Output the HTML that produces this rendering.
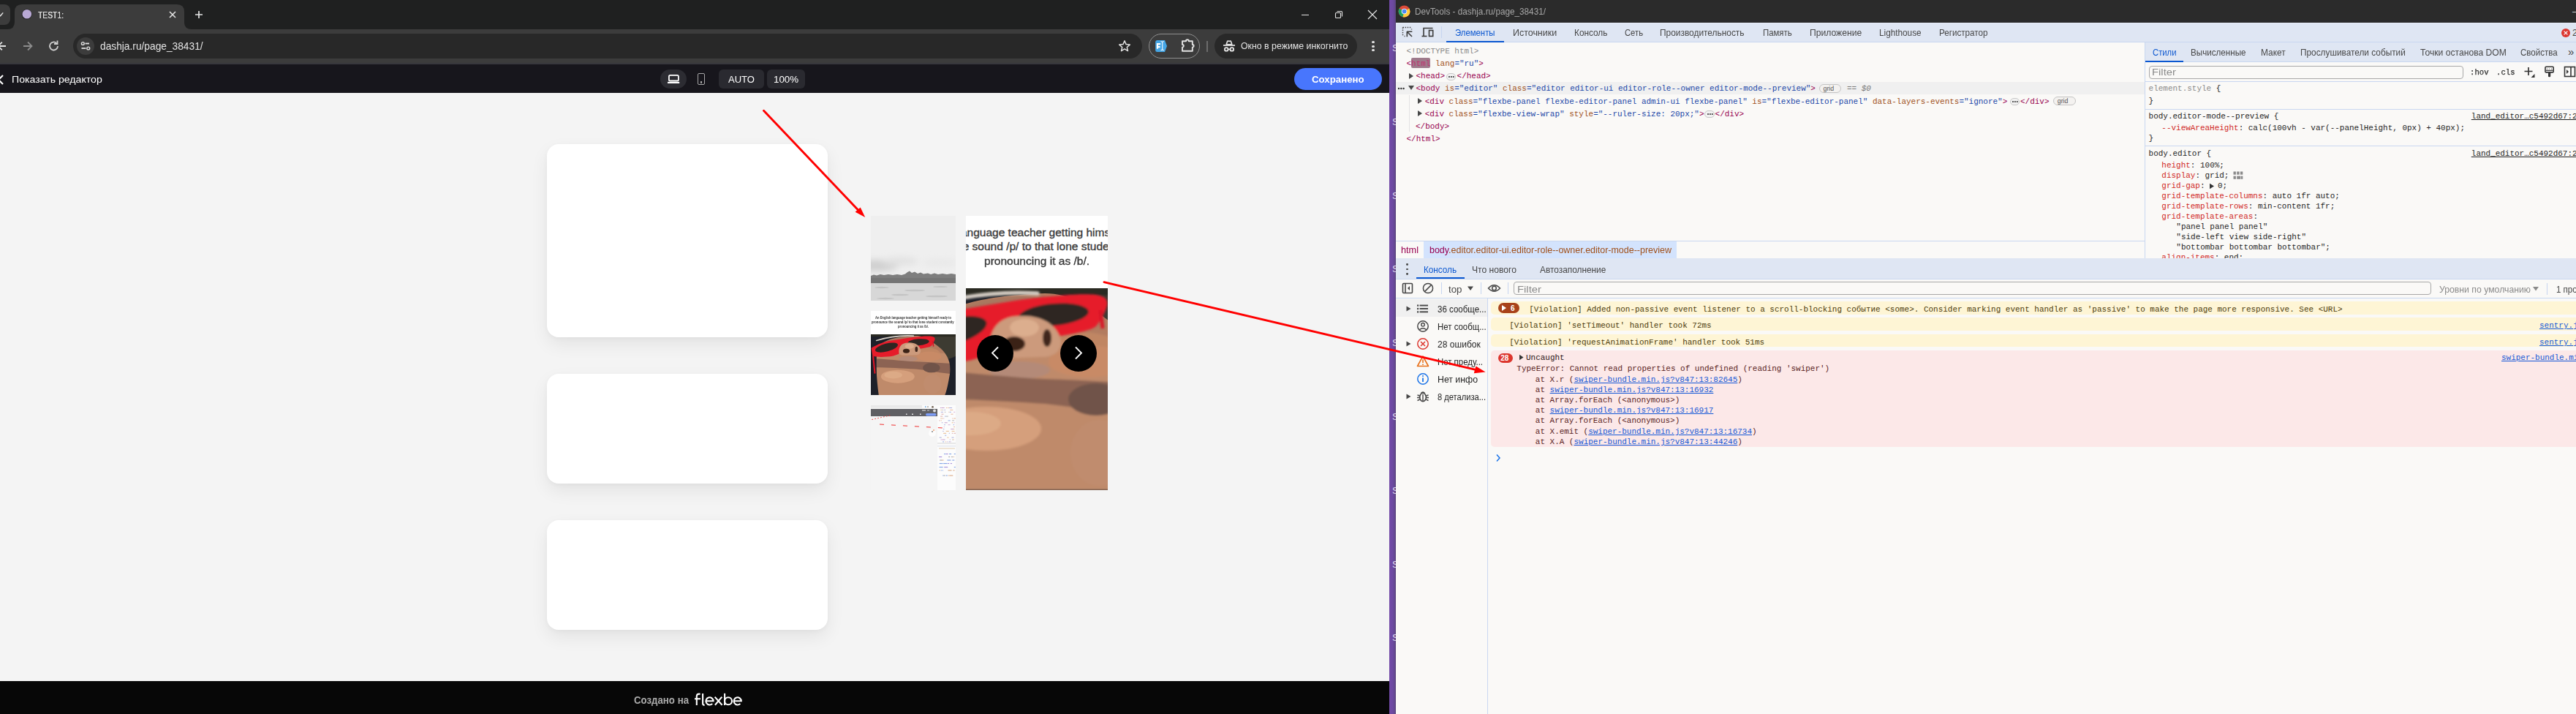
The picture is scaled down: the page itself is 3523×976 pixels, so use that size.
<!DOCTYPE html>
<html><head><meta charset="utf-8"><style>
html,body{margin:0;padding:0;}
body{width:3523px;height:976px;overflow:hidden;position:relative;background:#faf9f7;}
.t{position:absolute;white-space:pre;}
.r{position:absolute;}
.s{position:absolute;overflow:visible;}
</style></head><body>
<div class="r" style="left:0.00px;top:0.00px;width:1900.00px;height:40.00px;background:#1f2020;"></div>
<svg class="s" style="left:0.00px;top:0.00px;" width="300" height="40" viewBox="0 0 300 40"><path d="M10 40 Q20 40 20 30 L20 16 Q20 6 30 6 L242 6 Q252 6 252 16 L252 30 Q252 40 262 40 Z" fill="#3c3c3c"/></svg>
<div class="r" style="left:-20.00px;top:6.00px;width:34.00px;height:28.00px;background:#3c3c3c;border-radius:8px;"></div>
<svg class="s" style="left:0.00px;top:14.00px;" width="8" height="12" viewBox="0 0 8 12"><path d="M-1.5 5.8 L0.6 7.8 L4.2 3.4" stroke="#e8e8e8" stroke-width="1.4" fill="none"/></svg>
<svg class="s" style="left:28.00px;top:11.00px;" width="18" height="18" viewBox="0 0 18 18"><circle cx="8.6" cy="8.6" r="7" fill="#1a1a1a"/><circle cx="8.8" cy="8.3" r="6.3" fill="#b8a8d4"/></svg>
<div class="t" style="left:52.20px;top:15px;font-family:'Liberation Sans', sans-serif;font-size:12.50px;line-height:12.50px;color:#e3e3e3;font-weight:400;transform:scaleX(0.8260);transform-origin:0 0;text-shadow:0 0 0.3px #e3e3e3;">TEST1:</div>
<svg class="s" style="left:230.00px;top:14.00px;" width="12" height="12" viewBox="0 0 12 12"><path d="M2 2 L10 10 M10 2 L2 10" stroke="#e3e3e3" stroke-width="1.6"/></svg>
<svg class="s" style="left:265.00px;top:13.00px;" width="14" height="14" viewBox="0 0 14 14"><path d="M7 2 V12 M2 7 H12" stroke="#e3e3e3" stroke-width="1.7"/></svg>
<div class="r" style="left:1780.00px;top:20.00px;width:10.00px;height:1.20px;background:#e3e3e3;"></div>
<svg class="s" style="left:1824.00px;top:13.00px;" width="14" height="14" viewBox="0 0 14 14"><rect x="2.5" y="4.5" width="7" height="7" fill="none" stroke="#e3e3e3" stroke-width="1.1" rx="1"/><path d="M4.5 2.5 H10.5 Q11.5 2.5 11.5 3.5 V9.5" fill="none" stroke="#e3e3e3" stroke-width="1.1"/></svg>
<svg class="s" style="left:1869.00px;top:12.00px;" width="16" height="16" viewBox="0 0 16 16"><path d="M2 2 L14 14 M14 2 L2 14" stroke="#e3e3e3" stroke-width="1.2"/></svg>
<div class="r" style="left:0.00px;top:40.00px;width:1900.00px;height:46.00px;background:#3c3c3c;"></div>
<div class="r" style="left:0.00px;top:86.00px;width:1900.00px;height:2.00px;background:#38383d;"></div>
<svg class="s" style="left:-6.00px;top:55.00px;" width="18" height="16" viewBox="0 0 18 16"><path d="M2.5 8 H14 M8.8 2.6 L3.4 8 L8.8 13.4" stroke="#e3e3e3" stroke-width="1.8" fill="none"/></svg>
<svg class="s" style="left:30.00px;top:55.00px;" width="18" height="16" viewBox="0 0 18 16"><path d="M2 8 H13 M8 2.5 L13.5 8 L8 13.5" stroke="#8c8c8c" stroke-width="1.8" fill="none"/></svg>
<svg class="s" style="left:65.00px;top:54.00px;" width="18" height="18" viewBox="0 0 18 18"><path d="M14 9 A5.5 5.5 0 1 1 12.2 4.9" stroke="#d0d0d0" stroke-width="1.8" fill="none"/><path d="M13.5 1.5 V6 H9" stroke="#d0d0d0" stroke-width="1.8" fill="none"/></svg>
<div class="r" style="left:100.00px;top:46.00px;width:1462.00px;height:34.00px;background:#282828;border-radius:17px;"></div>
<div class="r" style="left:105.00px;top:51.00px;width:24.00px;height:24.00px;background:#3c3c3c;border-radius:12px;"></div>
<svg class="s" style="left:109.00px;top:55.00px;" width="16" height="16" viewBox="0 0 16 16"><circle cx="4.3" cy="4.5" r="1.9" fill="none" stroke="#e3e3e3" stroke-width="1.4"/><path d="M7.5 4.5 H13" stroke="#e3e3e3" stroke-width="1.8"/><circle cx="11.8" cy="11" r="1.9" fill="none" stroke="#e3e3e3" stroke-width="1.4"/><path d="M2.5 11 H8.5" stroke="#e3e3e3" stroke-width="1.8"/></svg>
<div class="t" style="left:137.00px;top:56px;font-family:'Liberation Sans', sans-serif;font-size:14.00px;line-height:14.00px;color:#e3e3e3;font-weight:400;transform:scaleX(0.9816);transform-origin:0 0;">dashja.ru/page_38431/</div>
<svg class="s" style="left:1529.00px;top:54.00px;" width="18" height="18" viewBox="0 0 18 18"><path d="M9 1.8 L11.1 6.6 L16.2 7.1 L12.3 10.5 L13.5 15.6 L9 12.9 L4.5 15.6 L5.7 10.5 L1.8 7.1 L6.9 6.6 Z" fill="none" stroke="#e3e3e3" stroke-width="1.5" stroke-linejoin="round"/></svg>
<div class="r" style="left:1571.00px;top:46.00px;width:69.50px;height:33.50px;background:transparent;border:1px solid #8f8f8f;border-radius:17px;box-sizing:border-box;"></div>
<svg class="s" style="left:1579.00px;top:53.00px;" width="20" height="20" viewBox="0 0 20 20"><path d="M1.2 4.6 Q1.2 2.1 3.7 2.1 L14 2.1 L17 10 L14 17.9 L3.7 17.9 Q1.2 17.9 1.2 15.4 Z" fill="#45a6e6"/><path d="M3.9 5.9 V13.8 M2.9 7.1 H8.1 M2.9 11.1 H7.6" stroke="#fff" stroke-width="2.1" fill="none"/><path d="M10.7 4.4 V14.9 M8.5 3.4 Q10.7 4.9 12.8 3.4 M8.5 15.9 Q10.7 14.4 12.8 15.9" stroke="#eef6fc" stroke-width="1.1" fill="none"/></svg>
<svg class="s" style="left:1614.00px;top:52.00px;" width="22" height="20" viewBox="0 0 22 20"><path d="M3 4.2 H8 A1.9 1.9 0 0 1 11.8 4.2 H16.8 V9 A1.8 1.8 0 0 1 16.8 12.6 V17.8 H3 V12.6 A1.8 1.8 0 0 0 3 9 Z" fill="none" stroke="#e3e3e3" stroke-width="1.9" stroke-linejoin="round"/></svg>
<div class="r" style="left:1650.00px;top:55.50px;width:2.00px;height:15.00px;background:#6b6b6b;"></div>
<div class="r" style="left:1661.00px;top:46.00px;width:194.50px;height:34.00px;background:#282828;border-radius:17px;"></div>
<svg class="s" style="left:1672.00px;top:54.00px;" width="18" height="18" viewBox="0 0 18 18"><path d="M5.2 6.8 L6.6 2.6 Q6.9 1.9 7.6 2.1 L9 2.5 L10.4 2.1 Q11.1 1.9 11.4 2.6 L12.8 6.8 Z" fill="none" stroke="#e8e8e8" stroke-width="1.6" stroke-linejoin="round"/><path d="M1 8 H17" stroke="#e8e8e8" stroke-width="1.7"/><circle cx="5.2" cy="13.4" r="2.3" fill="none" stroke="#e8e8e8" stroke-width="1.8"/><circle cx="12.8" cy="13.4" r="2.3" fill="none" stroke="#e8e8e8" stroke-width="1.8"/><path d="M7.5 13.4 H10.5" stroke="#e8e8e8" stroke-width="1.5"/></svg>
<div class="t" style="left:1696.80px;top:56px;font-family:'Liberation Sans', sans-serif;font-size:13.00px;line-height:13.00px;color:#e3e3e3;font-weight:400;transform:scaleX(0.9493);transform-origin:0 0;">Окно в режиме инкогнито</div>
<div class="r" style="left:1876.40px;top:55.90px;width:3.20px;height:3.20px;background:#e3e3e3;border-radius:50%;"></div>
<div class="r" style="left:1876.40px;top:61.50px;width:3.20px;height:3.20px;background:#e3e3e3;border-radius:50%;"></div>
<div class="r" style="left:1876.40px;top:67.10px;width:3.20px;height:3.20px;background:#e3e3e3;border-radius:50%;"></div>
<div class="r" style="left:0.00px;top:88.00px;width:1900.00px;height:39.00px;background:#17161c;"></div>
<svg class="s" style="left:-4.00px;top:101.00px;" width="12" height="16" viewBox="0 0 12 16"><path d="M8 2 L2 8 L8 14" stroke="#ffffff" stroke-width="2" fill="none"/></svg>
<div class="t" style="left:16.00px;top:102px;font-family:'Liberation Sans', sans-serif;font-size:13.00px;line-height:13.00px;color:#ffffff;font-weight:400;transform:scaleX(1.0863);transform-origin:0 0;">Показать редактор</div>
<div class="r" style="left:903.00px;top:95.00px;width:36.00px;height:26.00px;background:#2c2c32;border-radius:13px;"></div>
<svg class="s" style="left:911.00px;top:100.00px;" width="20" height="16" viewBox="0 0 20 16"><rect x="3.9" y="2.9" width="13" height="7.6" rx="1.6" fill="none" stroke="#fff" stroke-width="1.8"/><rect x="2" y="11.9" width="16.2" height="2.1" fill="#fff"/></svg>
<div class="r" style="left:954.00px;top:100.40px;width:10.40px;height:15.40px;background:transparent;border:1.9px solid #a6a6a6;border-radius:2px;box-sizing:border-box;"></div>
<div class="r" style="left:958.10px;top:111.40px;width:2.20px;height:2.20px;background:#a6a6a6;"></div>
<div class="r" style="left:983.00px;top:95.00px;width:62.00px;height:26.00px;background:#2a2a30;border-radius:6px;"></div>
<div class="r" style="left:1049.00px;top:95.00px;width:52.00px;height:26.00px;background:#2a2a30;border-radius:6px;"></div>
<div class="t" style="left:996.00px;top:103px;font-family:'Liberation Sans', sans-serif;font-size:12.00px;line-height:12.00px;color:#ffffff;font-weight:400;transform:scaleX(1.0870);transform-origin:0 0;">AUTO</div>
<div class="t" style="left:1057.80px;top:103px;font-family:'Liberation Sans', sans-serif;font-size:12.00px;line-height:12.00px;color:#ffffff;font-weight:400;transform:scaleX(1.1078);transform-origin:0 0;">100%</div>
<div class="r" style="left:1770.00px;top:93.00px;width:120.00px;height:30.00px;background:#4876fd;border-radius:15px;"></div>
<div class="t" style="left:1794.20px;top:103px;font-family:'Liberation Sans', sans-serif;font-size:12.00px;line-height:12.00px;color:#ffffff;font-weight:700;transform:scaleX(1.1052);transform-origin:0 0;">Сохранено</div>
<div class="r" style="left:0.00px;top:127.00px;width:1900.00px;height:804.00px;background:#f4f4f4;"></div>
<div class="r" style="left:748.00px;top:197.00px;width:384.00px;height:264.00px;background:#ffffff;border-radius:16px;box-shadow:0 10px 24px rgba(0,0,0,0.07), 0 2px 6px rgba(0,0,0,0.03);"></div>
<div class="r" style="left:748.00px;top:511.00px;width:384.00px;height:150.00px;background:#ffffff;border-radius:16px;box-shadow:0 10px 24px rgba(0,0,0,0.07), 0 2px 6px rgba(0,0,0,0.03);"></div>
<div class="r" style="left:748.00px;top:711.00px;width:384.00px;height:150.00px;background:#ffffff;border-radius:16px;box-shadow:0 10px 24px rgba(0,0,0,0.07), 0 2px 6px rgba(0,0,0,0.03);"></div>
<div style="position:absolute;left:1191px;top:295px;width:116px;height:116px;overflow:hidden;"><svg width="116" height="116" viewBox="0 0 116 116"><defs><filter id="bl1" x="-50%" y="-50%" width="200%" height="200%"><feGaussianBlur stdDeviation="4"/></filter><filter id="bl05"><feGaussianBlur stdDeviation="0.45"/></filter></defs><rect width="116" height="116" fill="#efefef"/><g filter="url(#bl1)"><ellipse cx="8" cy="68" rx="30" ry="8" fill="#d0d0d0"/><ellipse cx="40" cy="62" rx="25" ry="6" fill="#e2e2e2"/><ellipse cx="95" cy="64" rx="25" ry="6" fill="#e9e9e9"/></g><path d="M0 82 L4 80.5 L8 81.5 L13 80 L18 81 L24 80 L30 81 L36 80 L42 81 L47 79.5 L50 77 L53 75.5 L56 78 L60 76.5 L64 79 L68 77.5 L72 79.5 L78 78.5 L82 80 L87 78.5 L92 80 L98 79 L104 80 L110 79 L116 80 L116 92 L0 92 Z" fill="#7e7e7e" filter="url(#bl05)"/><rect x="0" y="85" width="116" height="7" fill="#747474" filter="url(#bl05)"/><rect x="0" y="92" width="116" height="24" fill="#d7d7d7"/><g fill="#c4c4c4" filter="url(#bl05)"><ellipse cx="15" cy="98" rx="10" ry="1.2"/><ellipse cx="60" cy="102" rx="14" ry="1.3"/><ellipse cx="95" cy="97" rx="10" ry="1"/><ellipse cx="40" cy="108" rx="12" ry="1.3"/><ellipse cx="90" cy="110" rx="15" ry="1.3"/><ellipse cx="20" cy="113" rx="12" ry="1.2"/></g></svg></div>
<div class="r" style="left:1191.00px;top:425.00px;width:116.00px;height:32.00px;background:#ffffff;"></div>
<div class="t" style="left:1196.70px;top:432px;font-family:'Liberation Sans', sans-serif;font-size:5.50px;line-height:5.50px;color:#333;font-weight:700;transform:scaleX(0.7479);transform-origin:0 0;">An English language teacher getting himself ready to</div>
<div class="t" style="left:1192.40px;top:438px;font-family:'Liberation Sans', sans-serif;font-size:5.50px;line-height:5.50px;color:#333;font-weight:700;transform:scaleX(0.7725);transform-origin:0 0;">pronounce the sound /p/ to that lone student constantly</div>
<div class="t" style="left:1227.70px;top:444px;font-family:'Liberation Sans', sans-serif;font-size:5.50px;line-height:5.50px;color:#333;font-weight:700;transform:scaleX(0.7553);transform-origin:0 0;">pronouncing it as /b/.</div>
<div style="position:absolute;left:1191px;top:457px;width:116px;height:83px;overflow:hidden;"><svg width="116" height="83" viewBox="0 0 378 276" preserveAspectRatio="none"><defs><filter id="fb2" x="-5%" y="-5%" width="110%" height="110%"><feGaussianBlur stdDeviation="1.6"/></filter><clipPath id="hd2"><path d="M35 276 C25 200 22 130 26 90 C30 40 70 12 200 7 C240 7 270 30 300 55 C340 85 360 130 352 180 C345 220 340 250 330 276 Z"/></clipPath></defs><rect x="0" y="0" width="378" height="276" fill="#1d2029"/><g filter="url(#fb2)"><ellipse cx="320" cy="40" rx="95" ry="75" fill="#3d3a30"/><rect x="-10" y="-10" width="400" height="20" fill="#2c2a24"/></g><g clip-path="url(#hd2)"><g filter="url(#fb2)"><rect x="0" y="0" width="378" height="276" fill="#b27c60"/><path d="M40 40 Q130 6 200 10 L200 26 Q130 30 50 70 Z" fill="#a87860"/><ellipse cx="250" cy="90" rx="60" ry="30" fill="#c08664"/><path d="M0 86 L378 86 L378 276 L0 276 Z" fill="#bf8a6a"/><ellipse cx="260" cy="100" rx="55" ry="22" fill="#c88a66"/><ellipse cx="165" cy="112" rx="42" ry="12" fill="#b48a78"/><path d="M0 110 C60 110 120 120 200 124 C260 126 320 130 378 134 L378 182 C320 178 260 164 200 158 C140 154 60 150 0 150 Z" fill="#8c6452"/><ellipse cx="270" cy="152" rx="38" ry="22" fill="#70524a"/><ellipse cx="120" cy="192" rx="75" ry="30" fill="#d59f7b"/><ellipse cx="100" cy="185" rx="40" ry="16" fill="#dcaa86"/><ellipse cx="275" cy="225" rx="40" ry="45" fill="#c08c6e"/></g></g><g filter="url(#fb2)"><path d="M25 28 Q110 2 190 7" fill="none" stroke="#d5cec5" stroke-width="5.5" stroke-linecap="round"/><path d="M2 62 C30 45 60 32 92 28 C130 22 160 16 189 13 C220 10 250 7 270 9 C283 11 287 16 285 24 C282 35 276 44 270 52 C262 58 240 62 217 66 L150 80 C135 85 120 92 100 98 C70 104 30 104 8 100 Z" fill="#e61a2c"/><path d="M10 98 L18 178" stroke="#d81426" stroke-width="7"/><path d="M276 30 L279 55" stroke="#d81426" stroke-width="5"/><ellipse cx="70" cy="60" rx="52" ry="18" transform="rotate(-15 70 60)" fill="#2e2823"/><ellipse cx="212" cy="36" rx="48" ry="15" transform="rotate(-5 212 36)" fill="#2e2823"/><path d="M126 90 C120 60 135 38 165 38 C195 36 218 50 222 72 C224 86 212 94 196 94 L140 96 Z" fill="#cc9a7c"/><ellipse cx="172" cy="54" rx="20" ry="12" fill="#dcae8e"/><ellipse cx="158" cy="76" rx="15" ry="10" fill="#3a2118"/><ellipse cx="203" cy="68" rx="6" ry="12" fill="#3f261c"/></g></svg></div>
<div style="position:absolute;left:1191px;top:554px;width:116px;height:116px;overflow:hidden;background:#f5f5f5;"><svg width="116" height="116" viewBox="0 0 116 116"><rect x="0" y="0" width="70" height="3.6" fill="#e9e9e9"/><rect x="70" y="0" width="21" height="3.6" fill="#fbfbfb"/><rect x="74" y="1.3" width="1.5" height="1.5" fill="#5aa0e0"/><rect x="77.5" y="1.3" width="1" height="1.5" fill="#555"/><circle cx="84.5" cy="2.2" r="1.3" fill="#6a5a4a"/><rect x="0" y="5" width="91" height="10" fill="#606064"/><rect x="75" y="11" width="14.5" height="3.5" rx="1.7" fill="#7c9cf5"/><rect x="70" y="6.5" width="5" height="1" fill="#eee"/><rect x="77" y="6.5" width="3" height="1" fill="#ccc"/><circle cx="87" cy="7.5" r="2" fill="#ddd"/><rect x="48" y="11.5" width="1.5" height="1.5" fill="#eee"/><rect x="56" y="11.5" width="2" height="1.5" fill="#ddd"/><rect x="67" y="11.5" width="1.5" height="1.5" fill="#eee"/><rect x="91" y="0" width="25" height="116" fill="#fcfcfc"/><path d="M1.5 19.5 L28 13.5" stroke="#f03030" stroke-width="1" stroke-dasharray="1.5 2.5"/><path d="M12 26 L107 31.5" stroke="#f03030" stroke-width="1" stroke-dasharray="6 10"/><circle cx="84" cy="38" r="5" fill="#fdfdfd"/><circle cx="84" cy="36" r="0.8" fill="#333"/><circle cx="86" cy="34" r="1" fill="#f0a070"/><rect x="91" y="51" width="25" height="2" fill="#e8e8e8"/><rect x="91" y="55" width="25" height="1.5" fill="#e4e8f0"/><rect x="93" y="58.5" width="22" height="1" fill="#d8b890" opacity="0.7"/><rect x="94.9" y="3.0" width="1.5" height="1" fill="#b07ab8" opacity="0.7"/><rect x="96.6" y="3.0" width="4.0" height="1" fill="#b07ab8" opacity="0.7"/><rect x="102.9" y="3.0" width="1.5" height="1" fill="#e09a70" opacity="0.7"/><rect x="105.4" y="3.0" width="1.5" height="1" fill="#e09a70" opacity="0.7"/><rect x="107.1" y="3.0" width="4.0" height="1" fill="#8a8acb" opacity="0.7"/><rect x="95.4" y="5.9" width="1.5" height="1" fill="#e0a060" opacity="0.7"/><rect x="97.6" y="5.9" width="1.5" height="1" fill="#999" opacity="0.7"/><rect x="100.5" y="5.9" width="1.5" height="1" fill="#8a8acb" opacity="0.7"/><rect x="108.3" y="5.9" width="4.0" height="1" fill="#e09a70" opacity="0.7"/><rect x="95.8" y="8.8" width="3.0" height="1" fill="#8a8acb" opacity="0.7"/><rect x="100.8" y="8.8" width="1.5" height="1" fill="#999" opacity="0.7"/><rect x="106.3" y="8.8" width="1.0" height="1" fill="#e09a70" opacity="0.7"/><rect x="107.7" y="8.8" width="2.0" height="1" fill="#6a8ad8" opacity="0.7"/><rect x="113.2" y="8.8" width="2.0" height="1" fill="#c890c8" opacity="0.7"/><rect x="96.5" y="11.7" width="3.0" height="1" fill="#d08a8a" opacity="0.7"/><rect x="109.5" y="11.7" width="3.0" height="1" fill="#e09a70" opacity="0.7"/><rect x="95.1" y="14.6" width="3.0" height="1" fill="#d08a8a" opacity="0.7"/><rect x="101.1" y="14.6" width="1.5" height="1" fill="#6a8ad8" opacity="0.7"/><rect x="102.8" y="14.6" width="3.0" height="1" fill="#999" opacity="0.7"/><rect x="95.3" y="17.5" width="1.5" height="1" fill="#e0a060" opacity="0.7"/><rect x="97.2" y="17.5" width="1.5" height="1" fill="#e0a060" opacity="0.7"/><rect x="99.3" y="17.5" width="1.0" height="1" fill="#c890c8" opacity="0.7"/><rect x="111.2" y="17.5" width="1.0" height="1" fill="#e09a70" opacity="0.7"/><rect x="113.2" y="17.5" width="3.0" height="1" fill="#e09a70" opacity="0.7"/><rect x="93.4" y="20.4" width="1.5" height="1" fill="#d08a8a" opacity="0.7"/><rect x="95.8" y="20.4" width="1.0" height="1" fill="#e0a060" opacity="0.7"/><rect x="105.6" y="20.4" width="3.0" height="1" fill="#6a8ad8" opacity="0.7"/><rect x="111.1" y="20.4" width="3.0" height="1" fill="#999" opacity="0.7"/><rect x="96.8" y="23.3" width="1.5" height="1" fill="#8a8acb" opacity="0.7"/><rect x="100.7" y="23.3" width="4.0" height="1" fill="#b07ab8" opacity="0.7"/><rect x="110.7" y="23.3" width="2.0" height="1" fill="#e0a060" opacity="0.7"/><rect x="113.6" y="23.3" width="1.5" height="1" fill="#c890c8" opacity="0.7"/><rect x="100.2" y="26.2" width="1.5" height="1" fill="#6a8ad8" opacity="0.7"/><rect x="105.6" y="26.2" width="3.0" height="1" fill="#c890c8" opacity="0.7"/><rect x="112.6" y="26.2" width="1.5" height="1" fill="#6a8ad8" opacity="0.7"/><rect x="99.8" y="29.1" width="1.0" height="1" fill="#c890c8" opacity="0.7"/><rect x="113.0" y="29.1" width="2.0" height="1" fill="#e09a70" opacity="0.7"/><rect x="98.9" y="32.0" width="1.5" height="1" fill="#6a8ad8" opacity="0.7"/><rect x="109.3" y="32.0" width="4.0" height="1" fill="#b07ab8" opacity="0.7"/><rect x="113.3" y="32.0" width="1.0" height="1" fill="#e0a060" opacity="0.7"/><rect x="98.2" y="34.9" width="1.5" height="1" fill="#8a8acb" opacity="0.7"/><rect x="102.8" y="34.9" width="4.0" height="1" fill="#e0a060" opacity="0.7"/><rect x="110.6" y="34.9" width="4.0" height="1" fill="#e0a060" opacity="0.7"/><rect x="99.1" y="37.8" width="4.0" height="1" fill="#e0a060" opacity="0.7"/><rect x="106.8" y="37.8" width="1.0" height="1" fill="#6a8ad8" opacity="0.7"/><rect x="110.9" y="37.8" width="1.5" height="1" fill="#d08a8a" opacity="0.7"/><rect x="113.7" y="37.8" width="4.0" height="1" fill="#d08a8a" opacity="0.7"/><rect x="101.2" y="40.7" width="2.0" height="1" fill="#6a8ad8" opacity="0.7"/><rect x="93.7" y="43.6" width="3.0" height="1" fill="#8a8acb" opacity="0.7"/><rect x="104.4" y="43.6" width="2.0" height="1" fill="#e0a060" opacity="0.7"/><rect x="110.5" y="43.6" width="3.0" height="1" fill="#8a8acb" opacity="0.7"/><rect x="95.5" y="46.5" width="2.0" height="1" fill="#c890c8" opacity="0.7"/><rect x="97.6" y="46.5" width="4.0" height="1" fill="#b07ab8" opacity="0.7"/><rect x="107.8" y="46.5" width="1.0" height="1" fill="#8a8acb" opacity="0.7"/><rect x="111.2" y="46.5" width="1.0" height="1" fill="#999" opacity="0.7"/><rect x="112.3" y="46.5" width="1.5" height="1" fill="#e0a060" opacity="0.7"/><rect x="98.1" y="49.4" width="2.0" height="1" fill="#6a8ad8" opacity="0.7"/><rect x="101.8" y="49.4" width="1.0" height="1" fill="#e0a060" opacity="0.7"/><rect x="103.9" y="49.4" width="1.0" height="1" fill="#b07ab8" opacity="0.7"/><rect x="106.5" y="49.4" width="2.0" height="1" fill="#8a8acb" opacity="0.7"/><rect x="108.7" y="49.4" width="1.0" height="1" fill="#c890c8" opacity="0.7"/><rect x="100.1" y="66.0" width="2.0" height="1.1" fill="#5a88e0" opacity="0.75"/><rect x="102.5" y="66.0" width="3.0" height="1.1" fill="#8a6ad0" opacity="0.75"/><rect x="107.1" y="66.0" width="3.0" height="1.1" fill="#5a88e0" opacity="0.75"/><rect x="113.8" y="66.0" width="2.0" height="1.1" fill="#5a88e0" opacity="0.75"/><rect x="93.2" y="70.0" width="4.0" height="1.1" fill="#8a6ad0" opacity="0.75"/><rect x="106.2" y="70.0" width="2.0" height="1.1" fill="#888" opacity="0.75"/><rect x="110.1" y="70.0" width="2.0" height="1.1" fill="#888" opacity="0.75"/><rect x="113.0" y="70.0" width="1.0" height="1.1" fill="#d09060" opacity="0.75"/><rect x="94.3" y="74.5" width="3.0" height="1.1" fill="#888" opacity="0.75"/><rect x="97.4" y="74.5" width="2.0" height="1.1" fill="#d09060" opacity="0.75"/><rect x="104.4" y="74.5" width="5.0" height="1.1" fill="#5a88e0" opacity="0.75"/><rect x="111.3" y="74.5" width="3.0" height="1.1" fill="#5a88e0" opacity="0.75"/><rect x="93.8" y="79.0" width="4.0" height="1.1" fill="#5a88e0" opacity="0.75"/><rect x="98.3" y="79.0" width="1.0" height="1.1" fill="#5a88e0" opacity="0.75"/><rect x="99.5" y="79.0" width="5.0" height="1.1" fill="#5a88e0" opacity="0.75"/><rect x="105.1" y="79.0" width="2.0" height="1.1" fill="#8a6ad0" opacity="0.75"/><rect x="108.9" y="79.0" width="2.0" height="1.1" fill="#8a6ad0" opacity="0.75"/><rect x="93.6" y="84.0" width="5.0" height="1.1" fill="#5a88e0" opacity="0.75"/><rect x="100.2" y="84.0" width="5.0" height="1.1" fill="#8a6ad0" opacity="0.75"/><rect x="113.8" y="84.0" width="2.0" height="1.1" fill="#5a88e0" opacity="0.75"/><rect x="93.7" y="88.5" width="1.0" height="1.1" fill="#d09060" opacity="0.75"/><rect x="95.8" y="88.5" width="1.0" height="1.1" fill="#5a88e0" opacity="0.75"/><rect x="97.8" y="88.5" width="1.0" height="1.1" fill="#5a88e0" opacity="0.75"/><rect x="105.5" y="88.5" width="5.0" height="1.1" fill="#d09060" opacity="0.75"/><rect x="112.5" y="88.5" width="2.0" height="1.1" fill="#d09060" opacity="0.75"/><rect x="98.3" y="95.5" width="1.0" height="1.1" fill="#5a88e0" opacity="0.75"/><rect x="99.5" y="95.5" width="2.0" height="1.1" fill="#888" opacity="0.75"/><rect x="102.7" y="95.5" width="2.0" height="1.1" fill="#5a88e0" opacity="0.75"/><rect x="105.7" y="95.5" width="1.0" height="1.1" fill="#d09060" opacity="0.75"/><rect x="107.3" y="95.5" width="5.0" height="1.1" fill="#d09060" opacity="0.75"/></svg></div>
<div style="position:absolute;left:1321px;top:295px;width:194px;height:375px;overflow:hidden;background:#fff;"><div class="t" style="left:-88.90px;top:15px;font-family:'Liberation Sans', sans-serif;font-size:15.50px;line-height:15.50px;color:#3a3a3a;font-weight:400;-webkit-text-stroke:0.35px #3a3a3a;">An English language teacher getting himself ready to</div><div class="t" style="left:-94.80px;top:34px;font-family:'Liberation Sans', sans-serif;font-size:15.50px;line-height:15.50px;color:#3a3a3a;font-weight:400;-webkit-text-stroke:0.35px #3a3a3a;">pronounce the sound /p/ to that lone student constantly</div><div class="t" style="left:25.00px;top:54px;font-family:'Liberation Sans', sans-serif;font-size:15.50px;line-height:15.50px;color:#3a3a3a;font-weight:400;transform:scaleX(1.0007);transform-origin:0 0;-webkit-text-stroke:0.35px #3a3a3a;">pronouncing it as /b/.</div><svg style="position:absolute;left:0;top:99px;" width="194" height="276" viewBox="92 0 194 276" preserveAspectRatio="none"><defs><filter id="fb" x="-5%" y="-5%" width="110%" height="110%"><feGaussianBlur stdDeviation="1.6"/></filter><clipPath id="hd"><path d="M35 276 C25 200 22 130 26 90 C30 40 70 12 200 7 C240 7 270 30 300 55 C340 85 360 130 352 180 C345 220 340 250 330 276 Z"/></clipPath></defs><rect x="0" y="0" width="378" height="276" fill="#1d2029"/><g filter="url(#fb)"><ellipse cx="320" cy="40" rx="95" ry="75" fill="#3d3a30"/><rect x="-10" y="-10" width="400" height="20" fill="#2c2a24"/></g><g clip-path="url(#hd)"><g filter="url(#fb)"><rect x="0" y="0" width="378" height="276" fill="#b27c60"/><path d="M40 40 Q130 6 200 10 L200 26 Q130 30 50 70 Z" fill="#a87860"/><ellipse cx="250" cy="90" rx="60" ry="30" fill="#c08664"/><path d="M0 86 L378 86 L378 276 L0 276 Z" fill="#bf8a6a"/><ellipse cx="260" cy="100" rx="55" ry="22" fill="#c88a66"/><ellipse cx="165" cy="112" rx="42" ry="12" fill="#b48a78"/><path d="M0 110 C60 110 120 120 200 124 C260 126 320 130 378 134 L378 182 C320 178 260 164 200 158 C140 154 60 150 0 150 Z" fill="#8c6452"/><ellipse cx="270" cy="152" rx="38" ry="22" fill="#70524a"/><ellipse cx="120" cy="192" rx="75" ry="30" fill="#d59f7b"/><ellipse cx="100" cy="185" rx="40" ry="16" fill="#dcaa86"/><ellipse cx="275" cy="225" rx="40" ry="45" fill="#c08c6e"/></g></g><g filter="url(#fb)"><path d="M25 28 Q110 2 190 7" fill="none" stroke="#d5cec5" stroke-width="5.5" stroke-linecap="round"/><path d="M2 62 C30 45 60 32 92 28 C130 22 160 16 189 13 C220 10 250 7 270 9 C283 11 287 16 285 24 C282 35 276 44 270 52 C262 58 240 62 217 66 L150 80 C135 85 120 92 100 98 C70 104 30 104 8 100 Z" fill="#e61a2c"/><path d="M10 98 L18 178" stroke="#d81426" stroke-width="7"/><path d="M276 30 L279 55" stroke="#d81426" stroke-width="5"/><ellipse cx="70" cy="60" rx="52" ry="18" transform="rotate(-15 70 60)" fill="#2e2823"/><ellipse cx="212" cy="36" rx="48" ry="15" transform="rotate(-5 212 36)" fill="#2e2823"/><path d="M126 90 C120 60 135 38 165 38 C195 36 218 50 222 72 C224 86 212 94 196 94 L140 96 Z" fill="#cc9a7c"/><ellipse cx="172" cy="54" rx="20" ry="12" fill="#dcae8e"/><ellipse cx="158" cy="76" rx="15" ry="10" fill="#3a2118"/><ellipse cx="203" cy="68" rx="6" ry="12" fill="#3f261c"/></g></svg></div>
<div class="r" style="left:1336.00px;top:457.60px;width:50.00px;height:50.00px;background:#000;border-radius:50%;"></div>
<div class="r" style="left:1450.00px;top:457.60px;width:50.00px;height:50.00px;background:#000;border-radius:50%;"></div>
<svg class="s" style="left:1353.00px;top:473.00px;" width="16" height="20" viewBox="0 0 16 20"><path d="M12 1.5 L4 9.5 L12 17.5" fill="none" stroke="#fff" stroke-width="1.8"/></svg>
<svg class="s" style="left:1467.00px;top:473.00px;" width="16" height="20" viewBox="0 0 16 20"><path d="M4 1.5 L12 9.5 L4 17.5" fill="none" stroke="#fff" stroke-width="1.8"/></svg>
<svg class="s" style="left:0;top:0;z-index:5;" width="3523" height="976"><path d="M1044.5 151.3 L1174 287.5" stroke="#ff0000" stroke-width="2.9" stroke-linecap="round"/><path d="M1183.2 297 L1169.6 289.8 L1176.7 283.4 Z" fill="#ff0000"/><path d="M1510 385.7 L2018 505.3" stroke="#ff0000" stroke-width="2.9" stroke-linecap="round"/><path d="M2031.6 508.6 L2018.4 500.6 L2015.8 510.2 Z" fill="#ff0000"/></svg>
<div class="r" style="left:0.00px;top:931.00px;width:1900.00px;height:45.00px;background:#070707;"></div>
<div class="t" style="left:866.50px;top:949px;font-family:'Liberation Sans', sans-serif;font-size:15.00px;line-height:15.00px;color:#ababab;font-weight:700;transform:scaleX(0.8833);transform-origin:0 0;">Создано на</div>
<svg class="s" style="left:940.00px;top:940.00px;" width="80" height="32" viewBox="0 0 80 32"><g fill="none" stroke="#fff" stroke-width="2.1"><path d="M12.8 24 V11.8 Q12.8 8.6 16 8.6 H17.6 M10 15.2 H18"/><path d="M21.1 8 V21.8 Q21.1 23.9 23.6 23.9"/><path d="M25.6 18.3 H35.6 A5.1 5.1 0 1 0 34.2 21.9"/><path d="M37.6 12.6 L47.6 23.8 M47.3 12.6 L37.9 23.8"/><path d="M51.1 7.8 V24"/><circle cx="56" cy="18.3" r="5"/><path d="M63.8 18.3 H73.8 A5.1 5.1 0 1 0 72.4 21.9"/></g></svg>
<div class="r" style="left:1900.00px;top:0.00px;width:9.00px;height:976.00px;background:linear-gradient(to right,#7249a8 0%,#6c4aa0 55%,#60468a 90%,#57476f 100%);"></div>
<div class="t" style="left:1904.00px;top:59px;font-family:'Liberation Sans', sans-serif;font-size:13.00px;line-height:13.00px;color:#e0d8f0;font-weight:400;">S</div>
<div class="t" style="left:1904.00px;top:160px;font-family:'Liberation Sans', sans-serif;font-size:13.00px;line-height:13.00px;color:#e0d8f0;font-weight:400;">S</div>
<div class="t" style="left:1904.00px;top:261px;font-family:'Liberation Sans', sans-serif;font-size:13.00px;line-height:13.00px;color:#e0d8f0;font-weight:400;">S</div>
<div class="t" style="left:1904.00px;top:361px;font-family:'Liberation Sans', sans-serif;font-size:13.00px;line-height:13.00px;color:#e0d8f0;font-weight:400;">S</div>
<div class="t" style="left:1904.00px;top:462px;font-family:'Liberation Sans', sans-serif;font-size:13.00px;line-height:13.00px;color:#e0d8f0;font-weight:400;">S</div>
<div class="t" style="left:1904.00px;top:563px;font-family:'Liberation Sans', sans-serif;font-size:13.00px;line-height:13.00px;color:#e0d8f0;font-weight:400;">S</div>
<div class="t" style="left:1904.00px;top:664px;font-family:'Liberation Sans', sans-serif;font-size:13.00px;line-height:13.00px;color:#e0d8f0;font-weight:400;">S</div>
<div class="t" style="left:1904.00px;top:765px;font-family:'Liberation Sans', sans-serif;font-size:13.00px;line-height:13.00px;color:#e0d8f0;font-weight:400;">S</div>
<div class="t" style="left:1904.00px;top:865px;font-family:'Liberation Sans', sans-serif;font-size:13.00px;line-height:13.00px;color:#e0d8f0;font-weight:400;">S</div>
<div class="r" style="left:1909.00px;top:0.00px;width:1614.00px;height:976.00px;background:#faf9f7;"></div>
<div class="r" style="left:1909.00px;top:0.00px;width:1614.00px;height:31.00px;background:#2b2b2b;"></div>
<svg class="s" style="left:1912.00px;top:7.00px;" width="17" height="17" viewBox="0 0 17 17"><circle cx="8.5" cy="8.5" r="8" fill="#dd4b39"/><path d="M8.5 8.5 L1.6 4.5 A8 8 0 0 0 6.5 16.2 Z" fill="#1ea362"/><path d="M8.5 8.5 L6.5 16.2 A8 8 0 0 0 16.5 8.5 L15.4 4.5 Z" fill="#ffcd40"/><circle cx="8.5" cy="8.5" r="3.8" fill="#fff"/><circle cx="8.5" cy="8.5" r="3" fill="#4a8af4"/></svg>
<div class="t" style="left:1934.60px;top:9px;font-family:'Liberation Sans', sans-serif;font-size:13.00px;line-height:13.00px;color:#a6a6a6;font-weight:400;transform:scaleX(0.9039);transform-origin:0 0;">DevTools - dashja.ru/page_38431/</div>
<div class="t" style="left:3518.00px;top:10px;font-family:'Liberation Sans', sans-serif;font-size:12.00px;line-height:12.00px;color:#cfcfcf;font-weight:400;">—</div>
<div class="r" style="left:1909.00px;top:31.00px;width:1614.00px;height:26.00px;background:#dfe6f3;"></div>
<div class="r" style="left:1909.00px;top:31.00px;width:1614.00px;height:1.00px;background:#e9eefa;"></div>
<div class="r" style="left:1909.00px;top:56.60px;width:1614.00px;height:1.20px;background:#c9d7f0;"></div>
<svg class="s" style="left:1917.00px;top:36.00px;" width="16" height="16" viewBox="0 0 16 16"><path d="M1.5 1.5 H13.5 M1.5 1.5 V13.5" stroke="#444" stroke-width="1.4" stroke-dasharray="1.5 1.6" fill="none"/><path d="M13.5 3.5 V4.5 M3.5 13.5 H4.5" stroke="#444" stroke-width="1.4"/><path d="M7 7.3 H14.3 M7.3 7 V14.3 M7.3 7.3 L14 14" stroke="#3b3b3b" stroke-width="1.6" fill="none"/></svg>
<svg class="s" style="left:1944.00px;top:37.00px;" width="18" height="14" viewBox="0 0 18 14"><path d="M3 12.5 V1.5 H15.5" stroke="#3b3b3b" stroke-width="1.6" fill="none"/><path d="M0.5 12.5 H7.5" stroke="#3b3b3b" stroke-width="1.6"/><rect x="10.5" y="4.5" width="5.2" height="8" fill="none" stroke="#3b3b3b" stroke-width="1.6"/></svg>
<div class="r" style="left:1971.00px;top:36.00px;width:1.00px;height:16.00px;background:#c6d5f0;"></div>
<div class="r" style="left:1977.90px;top:55.80px;width:79.00px;height:2.20px;background:#0b57d0;"></div>
<div class="t" style="left:1989.50px;top:39px;font-family:'Liberation Sans', sans-serif;font-size:12.50px;line-height:12.50px;color:#0b57d0;font-weight:400;transform:scaleX(0.9087);transform-origin:0 0;">Элементы</div>
<div class="t" style="left:2068.60px;top:39px;font-family:'Liberation Sans', sans-serif;font-size:12.50px;line-height:12.50px;color:#474747;font-weight:400;transform:scaleX(0.9959);transform-origin:0 0;">Источники</div>
<div class="t" style="left:2152.60px;top:39px;font-family:'Liberation Sans', sans-serif;font-size:12.50px;line-height:12.50px;color:#474747;font-weight:400;transform:scaleX(0.9456);transform-origin:0 0;">Консоль</div>
<div class="t" style="left:2222.30px;top:39px;font-family:'Liberation Sans', sans-serif;font-size:12.50px;line-height:12.50px;color:#474747;font-weight:400;transform:scaleX(0.8992);transform-origin:0 0;">Сеть</div>
<div class="t" style="left:2270.40px;top:39px;font-family:'Liberation Sans', sans-serif;font-size:12.50px;line-height:12.50px;color:#474747;font-weight:400;transform:scaleX(0.9520);transform-origin:0 0;">Производительность</div>
<div class="t" style="left:2410.70px;top:39px;font-family:'Liberation Sans', sans-serif;font-size:12.50px;line-height:12.50px;color:#474747;font-weight:400;transform:scaleX(0.9096);transform-origin:0 0;">Память</div>
<div class="t" style="left:2474.80px;top:39px;font-family:'Liberation Sans', sans-serif;font-size:12.50px;line-height:12.50px;color:#474747;font-weight:400;transform:scaleX(0.9711);transform-origin:0 0;">Приложение</div>
<div class="t" style="left:2569.90px;top:39px;font-family:'Liberation Sans', sans-serif;font-size:12.50px;line-height:12.50px;color:#474747;font-weight:400;transform:scaleX(0.9417);transform-origin:0 0;">Lighthouse</div>
<div class="t" style="left:2651.80px;top:39px;font-family:'Liberation Sans', sans-serif;font-size:12.50px;line-height:12.50px;color:#474747;font-weight:400;transform:scaleX(0.9303);transform-origin:0 0;">Регистратор</div>
<svg class="s" style="left:3502.00px;top:38.00px;" width="14" height="14" viewBox="0 0 14 14"><circle cx="7" cy="7" r="6" fill="#dc362e"/><path d="M4.6 4.6 L9.4 9.4 M9.4 4.6 L4.6 9.4" stroke="#fff" stroke-width="1.3"/></svg>
<div class="t" style="left:3518.00px;top:39px;font-family:'Liberation Sans', sans-serif;font-size:12.50px;line-height:12.50px;color:#474747;font-weight:400;">2</div>
<div class="r" style="left:1909.00px;top:112.00px;width:1024.00px;height:16.60px;background:#f0f0f0;"></div>
<div class="t" style="left:1923.50px;top:65px;font-family:'Liberation Mono', monospace;font-size:10.97px;line-height:10.97px;color:#8a8a8a;font-weight:400;"><span style="color:#8a8a8a">&lt;!DOCTYPE html&gt;</span></div>
<div class="r" style="left:1930.20px;top:79.40px;width:25.60px;height:13.40px;background:#9e7a8b;border-radius:2px;"></div>
<div class="t" style="left:1923.50px;top:82px;font-family:'Liberation Mono', monospace;font-size:10.97px;line-height:10.97px;color:#980050;font-weight:400;"><span style="color:#980050">&lt;</span><span style="color:#c0336f">html</span> <span style="color:#a0501a">lang</span><span style="color:#1a47a8">=&quot;ru&quot;</span><span style="color:#980050">&gt;</span></div>
<svg class="s" style="left:1926.00px;top:99.00px;" width="8" height="10" viewBox="0 0 8 10"><path d="M1 1 L7 5 L1 9 Z" fill="#474747"/></svg>
<div class="t" style="left:1936.50px;top:99px;font-family:'Liberation Mono', monospace;font-size:10.97px;line-height:10.97px;color:#980050;font-weight:400;"><span style="color:#980050">&lt;head&gt;</span></div>
<div class="r" style="left:1977.50px;top:100.20px;width:13.60px;height:9.60px;background:#f2f2f2;border:1px solid #c8c8c8;border-radius:5px;box-sizing:border-box;"></div>
<svg class="s" style="left:1980.40px;top:103.00px;" width="12" height="4" viewBox="0 0 12 4"><circle cx="2" cy="2" r="1.05" fill="#333"/><circle cx="4.9" cy="2" r="1.05" fill="#333"/><circle cx="7.8" cy="2" r="1.05" fill="#333"/></svg>
<div class="t" style="left:1992.60px;top:99px;font-family:'Liberation Mono', monospace;font-size:10.97px;line-height:10.97px;color:#980050;font-weight:400;"><span style="color:#980050">&lt;/head&gt;</span></div>
<svg class="s" style="left:1910.50px;top:119.00px;" width="12" height="4" viewBox="0 0 12 4"><circle cx="2" cy="2" r="1.2" fill="#333"/><circle cx="5.3" cy="2" r="1.2" fill="#333"/><circle cx="8.6" cy="2" r="1.2" fill="#333"/></svg>
<svg class="s" style="left:1925.00px;top:116.00px;" width="10" height="8" viewBox="0 0 10 8"><path d="M1 1 H9 L5 7 Z" fill="#474747"/></svg>
<div class="t" style="left:1936.50px;top:116px;font-family:'Liberation Mono', monospace;font-size:10.97px;line-height:10.97px;color:#980050;font-weight:400;"><span style="color:#980050">&lt;body </span><span style="color:#a0501a">is</span><span style="color:#1a47a8">=&quot;editor&quot;</span> <span style="color:#a0501a">class</span><span style="color:#1a47a8">=&quot;editor editor-ui editor-role--owner editor-mode--preview&quot;</span><span style="color:#980050">&gt;</span></div>
<div class="r" style="left:2487.50px;top:114.50px;width:30.80px;height:12.50px;background:#f4f2f0;border:1px solid #c4c4c4;border-radius:7px;box-sizing:border-box;"></div>
<div class="t" style="left:2493.50px;top:117px;font-family:'Liberation Sans', sans-serif;font-size:8.80px;line-height:8.80px;color:#545454;font-weight:400;">grid</div>
<div class="t" style="left:2526.00px;top:116px;font-family:'Liberation Mono', monospace;font-size:10.97px;line-height:10.97px;color:#7a7a7a;font-weight:400;"><i>== $0</i></div>
<svg class="s" style="left:1938.00px;top:133.00px;" width="8" height="10" viewBox="0 0 8 10"><path d="M1 1 L7 5 L1 9 Z" fill="#474747"/></svg>
<div class="t" style="left:1948.70px;top:134px;font-family:'Liberation Mono', monospace;font-size:10.97px;line-height:10.97px;color:#980050;font-weight:400;"><span style="color:#980050">&lt;div </span><span style="color:#a0501a">class</span><span style="color:#1a47a8">=&quot;flexbe-panel flexbe-editor-panel admin-ui flexbe-panel&quot;</span> <span style="color:#a0501a">is</span><span style="color:#1a47a8">=&quot;flexbe-editor-panel&quot;</span> <span style="color:#a0501a">data-layers-events</span><span style="color:#1a47a8">=&quot;ignore&quot;</span><span style="color:#980050">&gt;</span></div>
<div class="r" style="left:2748.50px;top:134.30px;width:13.40px;height:9.60px;background:#f2f2f2;border:1px solid #c8c8c8;border-radius:5px;box-sizing:border-box;"></div>
<svg class="s" style="left:2751.30px;top:137.10px;" width="12" height="4" viewBox="0 0 12 4"><circle cx="2" cy="2" r="1.05" fill="#333"/><circle cx="4.9" cy="2" r="1.05" fill="#333"/><circle cx="7.8" cy="2" r="1.05" fill="#333"/></svg>
<div class="t" style="left:2763.00px;top:134px;font-family:'Liberation Mono', monospace;font-size:10.97px;line-height:10.97px;color:#980050;font-weight:400;"><span style="color:#980050">&lt;/div&gt;</span></div>
<div class="r" style="left:2807.60px;top:131.80px;width:31.40px;height:12.50px;background:#f4f2f0;border:1px solid #c4c4c4;border-radius:7px;box-sizing:border-box;"></div>
<div class="t" style="left:2813.80px;top:134px;font-family:'Liberation Sans', sans-serif;font-size:8.80px;line-height:8.80px;color:#545454;font-weight:400;">grid</div>
<svg class="s" style="left:1938.00px;top:150.00px;" width="8" height="10" viewBox="0 0 8 10"><path d="M1 1 L7 5 L1 9 Z" fill="#474747"/></svg>
<div class="t" style="left:1948.70px;top:151px;font-family:'Liberation Mono', monospace;font-size:10.97px;line-height:10.97px;color:#980050;font-weight:400;"><span style="color:#980050">&lt;div </span><span style="color:#a0501a">class</span><span style="color:#1a47a8">=&quot;flexbe-view-wrap&quot;</span> <span style="color:#a0501a">style</span><span style="color:#1a47a8">=&quot;--ruler-size: 20px;&quot;</span><span style="color:#980050">&gt;</span></div>
<div class="r" style="left:2331.40px;top:151.30px;width:13.60px;height:9.60px;background:#f2f2f2;border:1px solid #c8c8c8;border-radius:5px;box-sizing:border-box;"></div>
<svg class="s" style="left:2334.30px;top:154.10px;" width="12" height="4" viewBox="0 0 12 4"><circle cx="2" cy="2" r="1.05" fill="#333"/><circle cx="4.9" cy="2" r="1.05" fill="#333"/><circle cx="7.8" cy="2" r="1.05" fill="#333"/></svg>
<div class="t" style="left:2345.60px;top:151px;font-family:'Liberation Mono', monospace;font-size:10.97px;line-height:10.97px;color:#980050;font-weight:400;"><span style="color:#980050">&lt;/div&gt;</span></div>
<div class="t" style="left:1936.00px;top:168px;font-family:'Liberation Mono', monospace;font-size:10.97px;line-height:10.97px;color:#980050;font-weight:400;"><span style="color:#980050">&lt;/body&gt;</span></div>
<div class="t" style="left:1923.50px;top:185px;font-family:'Liberation Mono', monospace;font-size:10.97px;line-height:10.97px;color:#980050;font-weight:400;"><span style="color:#980050">&lt;/html&gt;</span></div>
<div class="r" style="left:1927.00px;top:130.00px;width:1.00px;height:50.00px;background:#e3e3e3;"></div>
<div class="r" style="left:1909.00px;top:329.00px;width:1024.00px;height:1.00px;background:#c9d7f0;"></div>
<div class="r" style="left:1947.30px;top:330.00px;width:345.50px;height:23.00px;background:#d3e3fd;"></div>
<div class="t" style="left:1916.00px;top:336px;font-family:'Liberation Sans', sans-serif;font-size:12.50px;line-height:12.50px;color:#980050;font-weight:400;transform:scaleX(1.0163);transform-origin:0 0;">html</div>
<div class="t" style="left:1954.60px;top:336px;font-family:'Liberation Sans', sans-serif;font-size:12.50px;line-height:12.50px;color:#980050;font-weight:400;transform:scaleX(0.9971);transform-origin:0 0;"><span style="color:#980050">body</span><span style="color:#a0501a">.editor.editor-ui.editor-role--owner.editor-mode--preview</span></div>
<div class="r" style="left:2933.00px;top:57.00px;width:1.00px;height:296.00px;background:#c9d7f0;"></div>
<div class="r" style="left:2934.00px;top:57.80px;width:590.00px;height:27.00px;background:#dfe6f3;"></div>
<div class="r" style="left:2934.00px;top:84.40px;width:590.00px;height:1.00px;background:#c9d7f0;"></div>
<div class="r" style="left:2933.50px;top:82.60px;width:52.00px;height:2.20px;background:#0b57d0;"></div>
<div class="t" style="left:2943.50px;top:66px;font-family:'Liberation Sans', sans-serif;font-size:12.50px;line-height:12.50px;color:#0b57d0;font-weight:400;transform:scaleX(0.9025);transform-origin:0 0;">Стили</div>
<div class="t" style="left:2995.70px;top:66px;font-family:'Liberation Sans', sans-serif;font-size:12.50px;line-height:12.50px;color:#474747;font-weight:400;transform:scaleX(0.9314);transform-origin:0 0;">Вычисленные</div>
<div class="t" style="left:3092.00px;top:66px;font-family:'Liberation Sans', sans-serif;font-size:12.50px;line-height:12.50px;color:#474747;font-weight:400;transform:scaleX(0.9526);transform-origin:0 0;">Макет</div>
<div class="t" style="left:3145.70px;top:66px;font-family:'Liberation Sans', sans-serif;font-size:12.50px;line-height:12.50px;color:#474747;font-weight:400;transform:scaleX(0.9466);transform-origin:0 0;">Прослушиватели событий</div>
<div class="t" style="left:3309.60px;top:66px;font-family:'Liberation Sans', sans-serif;font-size:12.50px;line-height:12.50px;color:#474747;font-weight:400;transform:scaleX(0.9707);transform-origin:0 0;">Точки останова DOM</div>
<div class="t" style="left:3447.00px;top:66px;font-family:'Liberation Sans', sans-serif;font-size:12.50px;line-height:12.50px;color:#474747;font-weight:400;transform:scaleX(0.9255);transform-origin:0 0;">Свойства</div>
<div class="t" style="left:3512.00px;top:63px;font-family:'Liberation Sans', sans-serif;font-size:15.00px;line-height:15.00px;color:#474747;font-weight:400;">»</div>
<div class="r" style="left:2938.60px;top:89.80px;width:430.00px;height:17.80px;background:#faf9f7;border:1px solid #a8a8a8;border-radius:4px;box-sizing:border-box;"></div>
<div class="t" style="left:2943.00px;top:93px;font-family:'Liberation Sans', sans-serif;font-size:12.00px;line-height:12.00px;color:#8a8a8a;font-weight:400;transform:scaleX(1.2375);transform-origin:0 0;">Filter</div>
<div class="t" style="left:3378.00px;top:93px;font-family:'Liberation Mono', monospace;font-size:11.50px;line-height:11.50px;color:#2a2a2a;font-weight:400;transform:scaleX(0.9238);transform-origin:0 0;-webkit-text-stroke:0.25px #2a2a2a;">:hov</div>
<div class="t" style="left:3414.00px;top:93px;font-family:'Liberation Mono', monospace;font-size:11.50px;line-height:11.50px;color:#2a2a2a;font-weight:400;transform:scaleX(0.9238);transform-origin:0 0;-webkit-text-stroke:0.25px #2a2a2a;">.cls</div>
<svg class="s" style="left:3451.00px;top:90.00px;" width="16" height="16" viewBox="0 0 16 16"><path d="M7 2 V13 M1.5 7.5 H12.5" stroke="#333" stroke-width="1.7"/><path d="M10.5 16 L15.5 16 L15.5 11 Z" fill="#333"/></svg>
<svg class="s" style="left:3479.00px;top:90.00px;" width="16" height="16" viewBox="0 0 16 16"><rect x="2" y="1.3" width="11.2" height="7.6" rx="1.2" fill="none" stroke="#333" stroke-width="1.6"/><path d="M3 6.3 H12.5" stroke="#333" stroke-width="1.2"/><path d="M4.5 3.5 V4.8 M7.5 3.5 V4.5 M10.5 3.5 V4.8" stroke="#666" stroke-width="0.9"/><rect x="6" y="9" width="3.2" height="6.2" rx="1.2" fill="#333"/></svg>
<svg class="s" style="left:3506.00px;top:90.00px;" width="17" height="16" viewBox="0 0 17 16"><rect x="1.5" y="1.5" width="14" height="13" fill="none" stroke="#333" stroke-width="1.6"/><path d="M10 1.5 V14.5" stroke="#333" stroke-width="1.6"/><path d="M4 5 L7 8 L4 11 Z" fill="#333"/></svg>
<div class="r" style="left:2934.00px;top:111.00px;width:590.00px;height:1.00px;background:#c9d7f0;"></div>
<div class="r" style="left:2934.00px;top:148.60px;width:590.00px;height:1.00px;background:#c9d7f0;"></div>
<div class="r" style="left:2934.00px;top:199.20px;width:590.00px;height:1.00px;background:#c9d7f0;"></div>
<div class="t" style="left:2938.60px;top:116px;font-family:'Liberation Mono', monospace;font-size:10.97px;line-height:10.97px;color:#1f1f1f;font-weight:400;"><span style="color:#8a8a8a">element.style</span> {</div>
<div class="t" style="left:2938.60px;top:133px;font-family:'Liberation Mono', monospace;font-size:10.97px;line-height:10.97px;color:#1f1f1f;font-weight:400;">}</div>
<div class="t" style="left:2938.60px;top:154px;font-family:'Liberation Mono', monospace;font-size:10.97px;line-height:10.97px;color:#1f1f1f;font-weight:400;">body.editor-mode--preview {</div>
<div class="t" style="left:2956.30px;top:170px;font-family:'Liberation Mono', monospace;font-size:10.97px;line-height:10.97px;color:#1f1f1f;font-weight:400;"><span style="color:#d0281f">--viewAreaHeight</span><span style="color:#1f1f1f">: calc(100vh - var(--panelHeight, 0px) + 40px);</span></div>
<div class="t" style="left:2938.60px;top:184px;font-family:'Liberation Mono', monospace;font-size:10.97px;line-height:10.97px;color:#1f1f1f;font-weight:400;">}</div>
<div class="t" style="left:2938.60px;top:205px;font-family:'Liberation Mono', monospace;font-size:10.97px;line-height:10.97px;color:#1f1f1f;font-weight:400;">body.editor {</div>
<div class="t" style="left:3379.80px;top:154px;font-family:'Liberation Mono', monospace;font-size:10.97px;line-height:10.97px;color:#1f1f1f;font-weight:400;"><u>land_editor…c5492d67:2</u></div>
<div class="t" style="left:3379.80px;top:205px;font-family:'Liberation Mono', monospace;font-size:10.97px;line-height:10.97px;color:#1f1f1f;font-weight:400;"><u>land_editor…c5492d67:2</u></div>
<div class="t" style="left:2956.30px;top:221px;font-family:'Liberation Mono', monospace;font-size:10.97px;line-height:10.97px;color:#1f1f1f;font-weight:400;"><span style="color:#d0281f">height</span><span style="color:#1f1f1f">: 100%;</span></div>
<div class="t" style="left:2956.30px;top:235px;font-family:'Liberation Mono', monospace;font-size:10.97px;line-height:10.97px;color:#1f1f1f;font-weight:400;"><span style="color:#d0281f">display</span><span style="color:#1f1f1f">: grid; </span></div>
<div class="t" style="left:2956.30px;top:249px;font-family:'Liberation Mono', monospace;font-size:10.97px;line-height:10.97px;color:#1f1f1f;font-weight:400;"><span style="color:#d0281f">grid-gap</span><span style="color:#1f1f1f">: </span></div>
<div class="t" style="left:2956.30px;top:263px;font-family:'Liberation Mono', monospace;font-size:10.97px;line-height:10.97px;color:#1f1f1f;font-weight:400;"><span style="color:#d0281f">grid-template-columns</span><span style="color:#1f1f1f">: auto 1fr auto;</span></div>
<div class="t" style="left:2956.30px;top:277px;font-family:'Liberation Mono', monospace;font-size:10.97px;line-height:10.97px;color:#1f1f1f;font-weight:400;"><span style="color:#d0281f">grid-template-rows</span><span style="color:#1f1f1f">: min-content 1fr;</span></div>
<div class="t" style="left:2956.30px;top:291px;font-family:'Liberation Mono', monospace;font-size:10.97px;line-height:10.97px;color:#1f1f1f;font-weight:400;"><span style="color:#d0281f">grid-template-areas</span><span style="color:#1f1f1f">:</span></div>
<svg class="s" style="left:3054.00px;top:234.00px;" width="14" height="12" viewBox="0 0 14 12"><g fill="#8a8a8a"><rect x="0.5" y="0.5" width="3.4" height="4.2"/><rect x="5.2" y="0.5" width="3.4" height="4.2"/><rect x="9.9" y="0.5" width="3.4" height="4.2"/><rect x="0.5" y="6.6" width="3.4" height="4.2"/><rect x="5.2" y="6.6" width="5.2" height="4.2"/><rect x="11" y="6.6" width="2.3" height="4.2"/></g></svg>
<svg class="s" style="left:3021.00px;top:250.00px;" width="8" height="9" viewBox="0 0 8 9"><path d="M1 0.8 L7 4.5 L1 8.2 Z" fill="#333"/></svg>
<div class="t" style="left:3033.00px;top:249px;font-family:'Liberation Mono', monospace;font-size:10.97px;line-height:10.97px;color:#1f1f1f;font-weight:400;">0;</div>
<div class="t" style="left:2976.30px;top:305px;font-family:'Liberation Mono', monospace;font-size:10.97px;line-height:10.97px;color:#1f1f1f;font-weight:400;">&quot;panel panel panel&quot;</div>
<div class="t" style="left:2976.30px;top:319px;font-family:'Liberation Mono', monospace;font-size:10.97px;line-height:10.97px;color:#1f1f1f;font-weight:400;">&quot;side-left view side-right&quot;</div>
<div class="t" style="left:2976.30px;top:333px;font-family:'Liberation Mono', monospace;font-size:10.97px;line-height:10.97px;color:#1f1f1f;font-weight:400;">&quot;bottombar bottombar bottombar&quot;;</div>
<div style="position:absolute;left:2934px;top:344px;width:589px;height:9px;overflow:hidden;"><div class="t" style="left:22.30px;top:3px;font-family:'Liberation Mono', monospace;font-size:10.97px;line-height:10.97px;color:#1f1f1f;font-weight:400;"><span style="color:#d0281f">align-items</span><span style="color:#1f1f1f">: end;</span></div></div>
<div class="r" style="left:1909.00px;top:353.00px;width:1614.00px;height:27.50px;background:#dfe6f3;"></div>
<div class="r" style="left:1909.00px;top:380.50px;width:1614.00px;height:1.00px;background:#c9d7f0;"></div>
<div class="r" style="left:1923.40px;top:359.80px;width:2.80px;height:2.80px;background:#474747;border-radius:50%;"></div>
<div class="r" style="left:1923.40px;top:366.60px;width:2.80px;height:2.80px;background:#474747;border-radius:50%;"></div>
<div class="r" style="left:1923.40px;top:373.40px;width:2.80px;height:2.80px;background:#474747;border-radius:50%;"></div>
<div class="r" style="left:1936.90px;top:378.60px;width:66.10px;height:2.20px;background:#0b57d0;"></div>
<div class="t" style="left:1946.90px;top:363px;font-family:'Liberation Sans', sans-serif;font-size:12.50px;line-height:12.50px;color:#0b57d0;font-weight:400;transform:scaleX(0.9373);transform-origin:0 0;">Консоль</div>
<div class="t" style="left:2013.00px;top:363px;font-family:'Liberation Sans', sans-serif;font-size:12.50px;line-height:12.50px;color:#474747;font-weight:400;transform:scaleX(0.9700);transform-origin:0 0;">Что нового</div>
<div class="t" style="left:2105.80px;top:363px;font-family:'Liberation Sans', sans-serif;font-size:12.50px;line-height:12.50px;color:#474747;font-weight:400;transform:scaleX(0.9484);transform-origin:0 0;">Автозаполнение</div>
<svg class="s" style="left:1917.00px;top:386.00px;" width="16" height="16" viewBox="0 0 16 16"><rect x="1.5" y="1.5" width="13" height="13" rx="1.2" fill="none" stroke="#474747" stroke-width="1.6"/><path d="M5 1.5 V14.5" stroke="#474747" stroke-width="1.6"/><path d="M11 5 L8 8 L11 11 Z" fill="#474747"/></svg>
<svg class="s" style="left:1945.00px;top:386.00px;" width="16" height="16" viewBox="0 0 16 16"><circle cx="8" cy="8" r="6.6" fill="none" stroke="#474747" stroke-width="1.5"/><path d="M3.4 12.6 L12.6 3.4" stroke="#474747" stroke-width="1.5"/></svg>
<div class="r" style="left:1971.00px;top:386.00px;width:1.00px;height:16.00px;background:#c6d5f0;"></div>
<div class="t" style="left:1981.00px;top:390px;font-family:'Liberation Sans', sans-serif;font-size:12.50px;line-height:12.50px;color:#474747;font-weight:400;transform:scaleX(1.0646);transform-origin:0 0;">top</div>
<svg class="s" style="left:2006.00px;top:390.00px;" width="10" height="8" viewBox="0 0 10 8"><path d="M1 1.5 H9 L5 7 Z" fill="#474747"/></svg>
<div class="r" style="left:2025.30px;top:386.00px;width:1.00px;height:16.00px;background:#c6d5f0;"></div>
<svg class="s" style="left:2034.00px;top:386.50px;" width="19" height="14" viewBox="0 0 19 14"><path d="M1.5 7 Q9.5 -1.5 17.5 7 Q9.5 15.5 1.5 7 Z" fill="none" stroke="#474747" stroke-width="1.5"/><circle cx="9.5" cy="7" r="2.8" fill="none" stroke="#474747" stroke-width="1.5"/></svg>
<div class="r" style="left:2062.40px;top:386.00px;width:1.00px;height:16.00px;background:#c6d5f0;"></div>
<div class="r" style="left:2070.30px;top:385.20px;width:1255.00px;height:18.00px;background:#faf9f7;border:1px solid #a8a8a8;border-radius:4px;box-sizing:border-box;"></div>
<div class="t" style="left:2074.50px;top:390px;font-family:'Liberation Sans', sans-serif;font-size:12.00px;line-height:12.00px;color:#8a8a8a;font-weight:400;transform:scaleX(1.2375);transform-origin:0 0;">Filter</div>
<div class="t" style="left:3335.80px;top:390px;font-family:'Liberation Sans', sans-serif;font-size:12.50px;line-height:12.50px;color:#8a8a8a;font-weight:400;transform:scaleX(0.9796);transform-origin:0 0;">Уровни по умолчанию</div>
<svg class="s" style="left:3463.00px;top:391.00px;" width="10" height="8" viewBox="0 0 10 8"><path d="M1 1 H9 L5 6.5 Z" fill="#8a8a8a"/></svg>
<div class="r" style="left:3483.00px;top:387.00px;width:1.00px;height:16.00px;background:#c6d5f0;"></div>
<div class="t" style="left:3495.50px;top:390px;font-family:'Liberation Sans', sans-serif;font-size:12.50px;line-height:12.50px;color:#474747;font-weight:400;transform:scaleX(0.9187);transform-origin:0 0;">1 проблема</div>
<div class="r" style="left:1909.00px;top:407.30px;width:1614.00px;height:1.00px;background:#c9d7f0;"></div>
<div class="r" style="left:2034.00px;top:408.00px;width:1.00px;height:568.00px;background:#c9d7f0;"></div>
<div class="r" style="left:1909.00px;top:409.40px;width:125.00px;height:24.10px;background:#f0f0f0;"></div>
<div class="t" style="left:1965.60px;top:417px;font-family:'Liberation Sans', sans-serif;font-size:12.50px;line-height:12.50px;color:#1f1f1f;font-weight:400;transform:scaleX(0.9220);transform-origin:0 0;">36 сообще...</div>
<div class="t" style="left:1965.60px;top:441px;font-family:'Liberation Sans', sans-serif;font-size:12.50px;line-height:12.50px;color:#1f1f1f;font-weight:400;transform:scaleX(0.9147);transform-origin:0 0;">Нет сообщ...</div>
<div class="t" style="left:1965.60px;top:465px;font-family:'Liberation Sans', sans-serif;font-size:12.50px;line-height:12.50px;color:#1f1f1f;font-weight:400;transform:scaleX(0.9652);transform-origin:0 0;">28 ошибок</div>
<div class="t" style="left:1965.60px;top:489px;font-family:'Liberation Sans', sans-serif;font-size:12.50px;line-height:12.50px;color:#1f1f1f;font-weight:400;transform:scaleX(0.9135);transform-origin:0 0;">Нет преду...</div>
<div class="t" style="left:1965.60px;top:513px;font-family:'Liberation Sans', sans-serif;font-size:12.50px;line-height:12.50px;color:#1f1f1f;font-weight:400;transform:scaleX(0.9842);transform-origin:0 0;">Нет инфо</div>
<div class="t" style="left:1965.60px;top:537px;font-family:'Liberation Sans', sans-serif;font-size:12.50px;line-height:12.50px;color:#1f1f1f;font-weight:400;transform:scaleX(0.8898);transform-origin:0 0;">8 детализа...</div>
<svg class="s" style="left:1922.00px;top:416.70px;" width="10" height="10" viewBox="0 0 10 10"><path d="M1.5 1.5 L7.5 5 L1.5 8.5 Z" fill="#474747"/></svg>
<svg class="s" style="left:1922.00px;top:464.80px;" width="10" height="10" viewBox="0 0 10 10"><path d="M1.5 1.5 L7.5 5 L1.5 8.5 Z" fill="#474747"/></svg>
<svg class="s" style="left:1922.00px;top:537.40px;" width="10" height="10" viewBox="0 0 10 10"><path d="M1.5 1.5 L7.5 5 L1.5 8.5 Z" fill="#474747"/></svg>
<svg class="s" style="left:1937.00px;top:415.70px;" width="18" height="12" viewBox="0 0 18 12"><g fill="#474747"><rect x="1" y="0.5" width="2.2" height="2.2"/><rect x="1" y="4.9" width="2.2" height="2.2"/><rect x="1" y="9.3" width="2.2" height="2.2"/><rect x="4.6" y="0.6" width="11.4" height="1.9"/><rect x="4.6" y="5" width="11.4" height="1.9"/><rect x="4.6" y="9.4" width="11.4" height="1.9"/></g></svg>
<svg class="s" style="left:1937.00px;top:436.80px;" width="18" height="18" viewBox="0 0 18 18"><circle cx="9" cy="9" r="7.2" fill="none" stroke="#474747" stroke-width="1.5"/><circle cx="9" cy="6.8" r="2.3" fill="none" stroke="#474747" stroke-width="1.4"/><path d="M4.2 13.8 Q9 9.5 13.8 13.8" fill="none" stroke="#474747" stroke-width="1.4"/></svg>
<svg class="s" style="left:1937.00px;top:460.80px;" width="18" height="18" viewBox="0 0 18 18"><circle cx="9" cy="9" r="7.2" fill="none" stroke="#dc362e" stroke-width="1.5"/><path d="M6 6 L12 12 M12 6 L6 12" stroke="#dc362e" stroke-width="1.5"/></svg>
<svg class="s" style="left:1937.00px;top:485.30px;" width="18" height="18" viewBox="0 0 18 18"><path d="M9 2 L16.5 15.5 H1.5 Z" fill="none" stroke="#e8711a" stroke-width="1.6" stroke-linejoin="round"/><path d="M9 6.5 V11" stroke="#e8711a" stroke-width="1.6"/><circle cx="9" cy="13.2" r="0.9" fill="#e8711a"/></svg>
<svg class="s" style="left:1937.00px;top:509.30px;" width="18" height="18" viewBox="0 0 18 18"><circle cx="9" cy="9" r="7.2" fill="none" stroke="#1a73e8" stroke-width="1.5"/><path d="M9 7.5 V13" stroke="#1a73e8" stroke-width="1.8"/><circle cx="9" cy="5" r="1" fill="#1a73e8"/></svg>
<svg class="s" style="left:1937.00px;top:533.40px;" width="18" height="18" viewBox="0 0 18 18"><ellipse cx="9" cy="10" rx="4.3" ry="5.8" fill="none" stroke="#474747" stroke-width="1.6"/><path d="M6.5 4.5 Q9 1.5 11.5 4.5" fill="none" stroke="#474747" stroke-width="1.6"/><path d="M1.5 7 L4.5 8 M16.5 7 L13.5 8 M1 10.5 H4.5 M17 10.5 H13.5 M1.5 14.5 L4.7 13 M16.5 14.5 L13.3 13 M9 6 V15.5" stroke="#474747" stroke-width="1.4"/></svg>
<div class="r" style="left:2039.00px;top:412.00px;width:1492.00px;height:17.70px;background:#fef5d5;border-radius:5px;"></div>
<div class="r" style="left:2039.00px;top:434.20px;width:1492.00px;height:18.20px;background:#fef5d5;border-radius:5px;"></div>
<div class="r" style="left:2039.00px;top:457.40px;width:1492.00px;height:17.10px;background:#fef5d5;border-radius:5px;"></div>
<div class="r" style="left:2039.00px;top:479.30px;width:1492.00px;height:132.00px;background:#fce8e8;border-radius:5px;"></div>
<div class="r" style="left:2049.10px;top:414.00px;width:28.70px;height:13.70px;background:#a8421a;border-radius:7px;"></div>
<svg class="s" style="left:2053.00px;top:416.00px;" width="8" height="10" viewBox="0 0 8 10"><path d="M1 1 L7 5 L1 9 Z" fill="#fff"/></svg>
<div class="t" style="left:2066.00px;top:417px;font-family:'Liberation Sans', sans-serif;font-size:10.00px;line-height:10.00px;color:#ffffff;font-weight:700;">6</div>
<div class="t" style="left:2091.20px;top:418px;font-family:'Liberation Mono', monospace;font-size:10.97px;line-height:10.97px;color:#4d3c0c;font-weight:400;">[Violation] Added non-passive event listener to a scroll-blocking событие &lt;some&gt;. Consider marking event handler as &#x27;passive&#x27; to make the page more responsive. See &lt;URL&gt;</div>
<div class="t" style="left:2064.20px;top:440px;font-family:'Liberation Mono', monospace;font-size:10.97px;line-height:10.97px;color:#4d3c0c;font-weight:400;">[Violation] &#x27;setTimeout&#x27; handler took 72ms</div>
<div class="t" style="left:2064.20px;top:463px;font-family:'Liberation Mono', monospace;font-size:10.97px;line-height:10.97px;color:#4d3c0c;font-weight:400;">[Violation] &#x27;requestAnimationFrame&#x27; handler took 51ms</div>
<div class="t" style="left:3473.00px;top:440px;font-family:'Liberation Mono', monospace;font-size:10.97px;line-height:10.97px;color:#1558d6;font-weight:400;"><u>sentry.js</u></div>
<div class="t" style="left:3473.00px;top:463px;font-family:'Liberation Mono', monospace;font-size:10.97px;line-height:10.97px;color:#1558d6;font-weight:400;"><u>sentry.js</u></div>
<div class="r" style="left:2048.80px;top:482.50px;width:20.20px;height:13.10px;background:#dc362e;border-radius:7px;"></div>
<div class="t" style="left:2052.30px;top:485px;font-family:'Liberation Sans', sans-serif;font-size:10.00px;line-height:10.00px;color:#ffffff;font-weight:700;">28</div>
<svg class="s" style="left:2077.00px;top:484.00px;" width="8" height="9" viewBox="0 0 8 9"><path d="M1 0.8 L6.5 4.5 L1 8.2 Z" fill="#333"/></svg>
<div class="t" style="left:2087.00px;top:484px;font-family:'Liberation Mono', monospace;font-size:10.97px;line-height:10.97px;color:#2a1414;font-weight:400;">Uncaught</div>
<div class="t" style="left:3421.00px;top:484px;font-family:'Liberation Mono', monospace;font-size:10.97px;line-height:10.97px;color:#1558d6;font-weight:400;"><u>swiper-bundle.min.js</u></div>
<div class="t" style="left:2074.30px;top:499px;font-family:'Liberation Mono', monospace;font-size:10.97px;line-height:10.97px;color:#5a1e1e;font-weight:400;">TypeError: Cannot read properties of undefined (reading &#x27;swiper&#x27;)</div>
<div class="t" style="left:2099.80px;top:514px;font-family:'Liberation Mono', monospace;font-size:10.97px;line-height:10.97px;color:#5a1e1e;font-weight:400;">at X.r (<u style="color:#1558d6">swiper-bundle.min.js?v847:13:82645</u>)</div>
<div class="t" style="left:2099.80px;top:528px;font-family:'Liberation Mono', monospace;font-size:10.97px;line-height:10.97px;color:#5a1e1e;font-weight:400;">at <u style="color:#1558d6">swiper-bundle.min.js?v847:13:16932</u></div>
<div class="t" style="left:2099.80px;top:542px;font-family:'Liberation Mono', monospace;font-size:10.97px;line-height:10.97px;color:#5a1e1e;font-weight:400;">at Array.forEach (&lt;anonymous&gt;)</div>
<div class="t" style="left:2099.80px;top:556px;font-family:'Liberation Mono', monospace;font-size:10.97px;line-height:10.97px;color:#5a1e1e;font-weight:400;">at <u style="color:#1558d6">swiper-bundle.min.js?v847:13:16917</u></div>
<div class="t" style="left:2099.80px;top:570px;font-family:'Liberation Mono', monospace;font-size:10.97px;line-height:10.97px;color:#5a1e1e;font-weight:400;">at Array.forEach (&lt;anonymous&gt;)</div>
<div class="t" style="left:2099.80px;top:585px;font-family:'Liberation Mono', monospace;font-size:10.97px;line-height:10.97px;color:#5a1e1e;font-weight:400;">at X.emit (<u style="color:#1558d6">swiper-bundle.min.js?v847:13:16734</u>)</div>
<div class="t" style="left:2099.80px;top:599px;font-family:'Liberation Mono', monospace;font-size:10.97px;line-height:10.97px;color:#5a1e1e;font-weight:400;">at X.A (<u style="color:#1558d6">swiper-bundle.min.js?v847:13:44246</u>)</div>
<svg class="s" style="left:2045.00px;top:620.00px;" width="8" height="12" viewBox="0 0 8 12"><path d="M2 1.5 L6 6 L2 10.5" fill="none" stroke="#1a73e8" stroke-width="1.5"/></svg>
</body></html>
